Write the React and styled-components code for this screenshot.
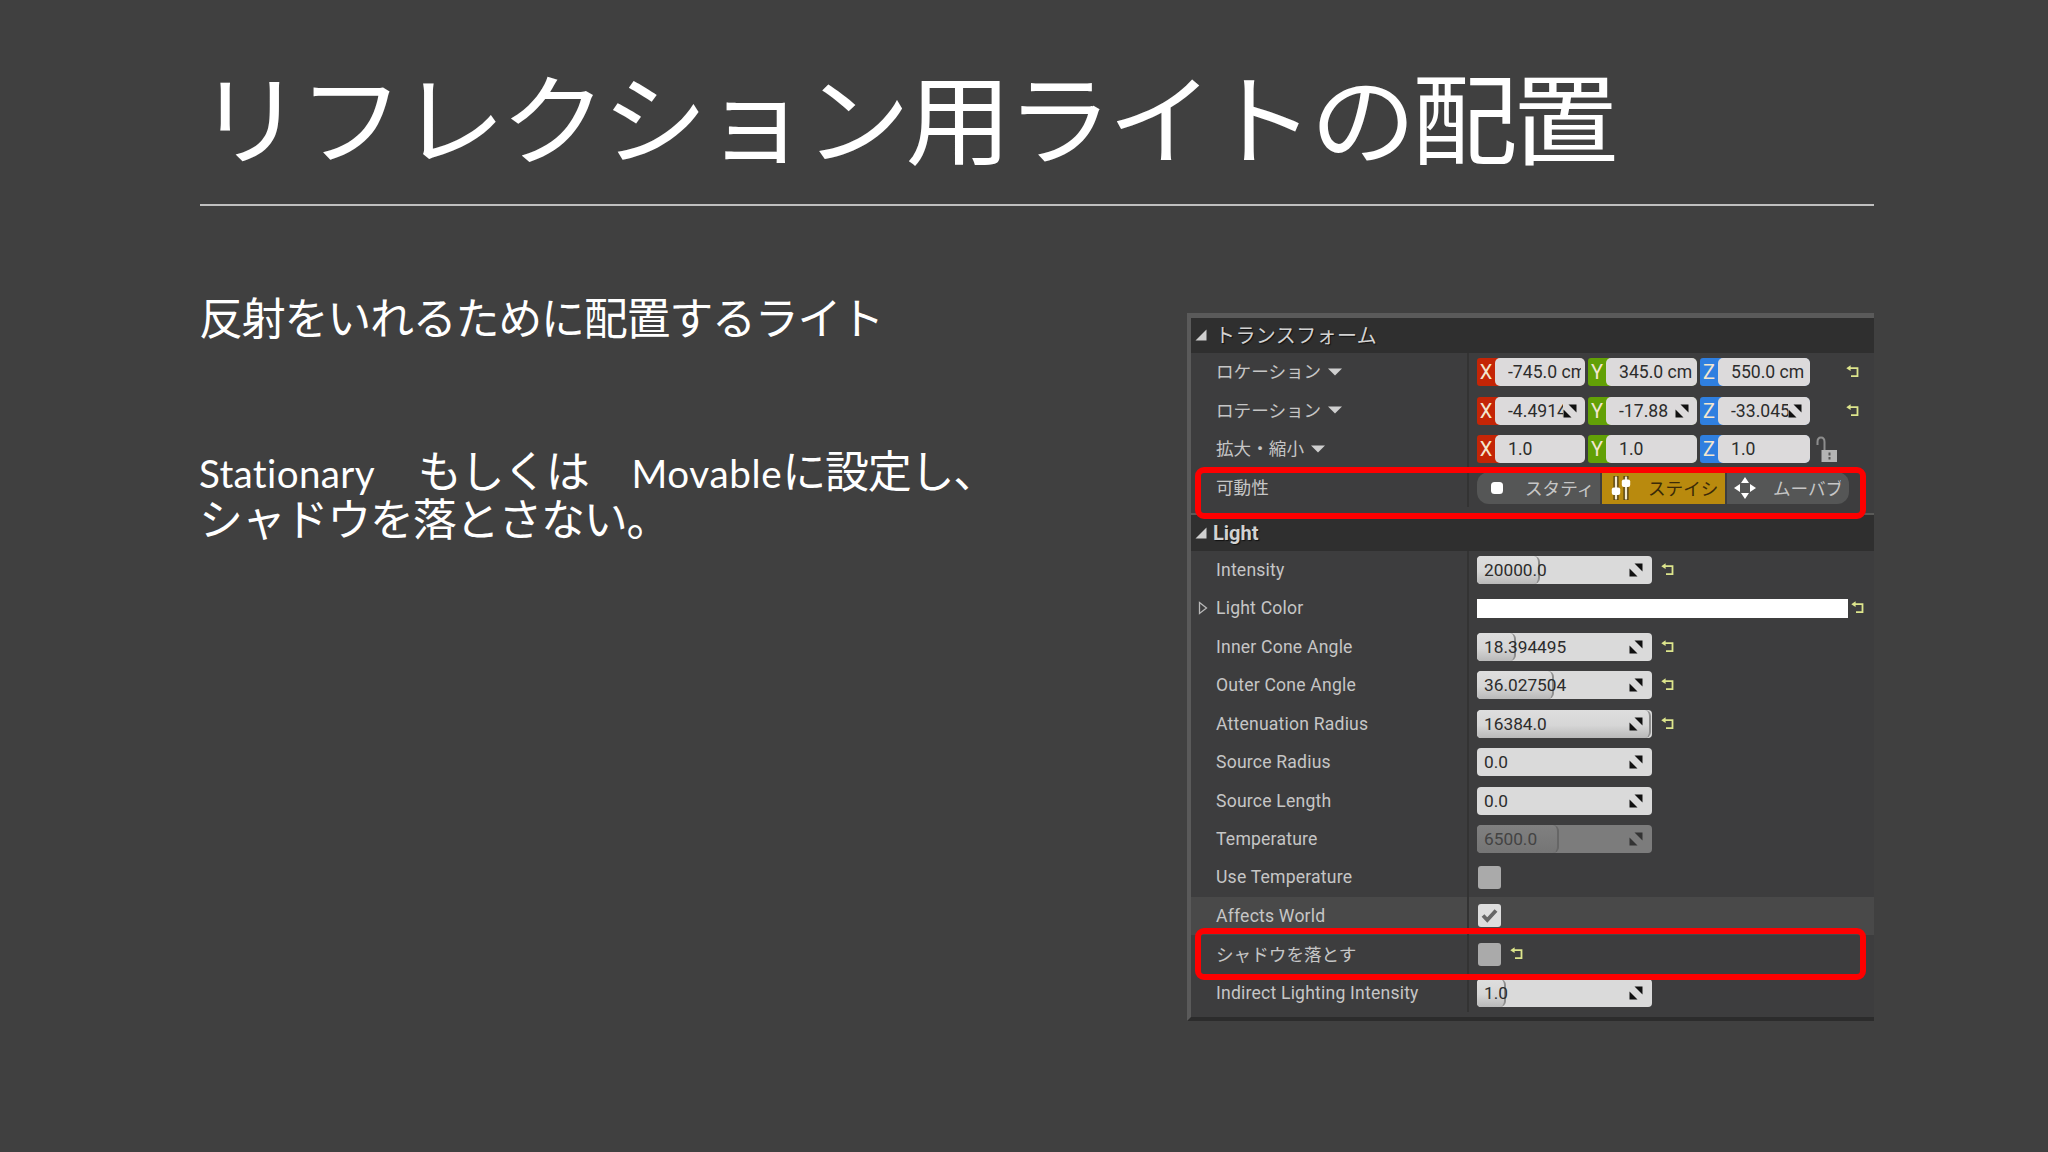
import React from 'react';
import styled, { createGlobalStyle } from 'styled-components';

const GlobalStyle = createGlobalStyle`
  * {
    box-sizing: border-box;
  }

  body {
    margin: 0;
    background: #404040;
  }
`;

const Slide = styled.div`
  width: 2048px;
  height: 1152px;
  padding: 60px 174px 0 200px;
  background: #404040;
  color: #fff;
  font-family: Lato, 'Noto Sans CJK JP', sans-serif;
  overflow: hidden;
`;

const TitleBar = styled.header`
  height: 146px;
  border-bottom: 2px solid #c0c0c0;
`;

const Title = styled.h1`
  margin: 0 0 0 -3px;
  height: 120px;
  line-height: 109px;
  font-family: 'Noto Sans CJK JP', sans-serif;
  font-size: 106px;
  font-weight: 400;
  letter-spacing: -4.8px;
  white-space: nowrap;
  transform: scaleY(0.935);
`;

const Content = styled.main`
  display: flex;
  justify-content: space-between;
`;

const Copy = styled.div`
  padding-top: 89px;
`;

const Paragraph = styled.p`
  margin: 0 0 ${props => props.$gap || 0}px -1px;
  font-size: 44px;
  letter-spacing: -1.25px;
  line-height: 46px;
  white-space: nowrap;
`;

const Latin = styled.span`
  font-size: 38.6px;
  letter-spacing: ${props => props.$spacing}px;
`;

const Panel = styled.section`
  width: 687px;
  height: 708px;
  margin-top: 107px;
  border-top: 5px solid #5a5a5a;
  border-left: 4px solid #5a5a5a;
  border-bottom: 4px solid #2c2c2c;
  background: #3d3d3e;
  color: #c6c6c6;
  font-family: Roboto, 'Noto Sans CJK JP', sans-serif;
  font-size: 17.6px;
`;

const SectionHeader = styled.div`
  display: flex;
  align-items: center;
  height: ${props => (props.$bold ? 36 : 35)}px;
  padding: 0 0 ${props => (props.$bold ? 0 : 2)}px 4px;
  background: #2f2f2f;
  color: #d2d2d2;
  font-size: 20px;
  font-weight: ${props => (props.$bold ? 700 : 400)};
  text-shadow: 1px 1px 1px #111;
`;

const SectionTitle = styled.span`
  margin-left: ${props => props.$indent}px;
  letter-spacing: ${props => props.$spacing}px;
`;

const Rows = styled.div`
  padding-bottom: ${props => props.$end || 0}px;
  border-bottom: ${props => (props.$line ? '2px solid #5a5a58' : 'none')};
`;

const Row = styled.div`
  position: relative;
  display: flex;
  height: 38.45px;
  background: ${props => (props.$hover ? '#494949' : 'transparent')};
`;

const Label = styled.div`
  display: flex;
  align-items: center;
  width: 278px;
  padding: 0 0 ${props => props.$lift || 0}px ${props => (props.$arrow ? 7 : 25)}px;
  border-right: 2px solid #333;
  letter-spacing: ${props => props.$spacing || 0}px;
  white-space: nowrap;

  svg {
    flex: none;
  }
`;

const LabelText = styled.span`
  margin: 0 7px 0 ${props => (props.$arrow ? 8 : 0)}px;
`;

const Field = styled.div`
  display: flex;
  align-items: center;
  padding-left: 8px;
`;

const Axis = styled.div`
  display: flex;
  align-items: center;
  width: ${props => props.$width}px;
  height: 28px;
  margin-right: 3px;
  background: ${props => props.$color};
  border-radius: 3px 6px 6px 3px;
`;

const AxisName = styled.span`
  width: 18px;
  color: #f3e6cf;
  font-size: 20px;
  line-height: 28px;
  text-align: center;
`;

const AxisInput = styled.div`
  display: flex;
  align-items: center;
  flex: 1;
  min-width: 0;
  height: 28px;
  padding: 0 ${props => (props.$spin ? 8 : 4)}px 0 13px;
  border-radius: 5px;
  background: #dcdadb;
  color: #2c2c2c;
  font-size: 17.6px;
`;

const AxisValue = styled.span`
  flex: 1;
  min-width: 0;
  overflow: hidden;
  white-space: nowrap;
`;

const NumberInput = styled.div`
  position: relative;
  display: flex;
  align-items: center;
  justify-content: space-between;
  width: 175px;
  height: 28px;
  padding: 0 9px 0 7px;
  border-radius: 4px;
  overflow: hidden;
  background: ${props => (props.$disabled ? '#7c7c7c' : '#dadada')};
  color: ${props => (props.$disabled ? '#434343' : '#2c2c2c')};
  font-size: 17.3px;
`;

const SliderFill = styled.span`
  position: absolute;
  inset: 0 auto 0 0;
  border-right: 2px solid ${props => (props.$disabled ? '#666' : '#8e8e8e')};
  border-radius: 4px 6px 6px 4px;
  background: ${props =>
    props.$disabled
      ? 'linear-gradient(#808080, #757575)'
      : 'linear-gradient(#dedede, #d6d6d6 55%, #b9b9b9)'};
`;

const NumberText = styled.span`
  position: relative;
`;

const SpinSvg = styled.svg`
  position: relative;
  flex: none;
`;

const ResetSlot = styled.span`
  display: flex;
  margin-left: ${props => props.$left}px;
`;

const ColorBar = styled.div`
  width: 371px;
  height: 19px;
  background: #fff;
`;

const Checkbox = styled.div`
  display: flex;
  align-items: center;
  justify-content: center;
  width: 23px;
  height: 23px;
  margin-left: 1px;
  border-radius: 3px;
  background: ${props => (props.$checked ? '#dedede' : '#aaa')};
`;

const Mobility = styled.div`
  display: flex;
  gap: 2px;
`;

const MobilityButton = styled.div`
  display: flex;
  align-items: center;
  width: ${props => props.$width}px;
  height: 32px;
  padding: 0 ${props => props.$end}px 0 ${props => props.$start}px;
  border-radius: ${props => props.$radius || 0};
  background: ${props => (props.$active ? '#b98a0e' : '#555656')};
  color: ${props => (props.$active ? '#3b2a08' : '#c6c6c6')};

  svg {
    flex: none;
  }
`;

const MobilityName = styled.span`
  flex: 1;
  min-width: 0;
  margin-left: ${props => props.$left}px;
  overflow: hidden;
  white-space: nowrap;
`;

const Highlight = styled.div`
  position: absolute;
  z-index: 1;
  top: ${props => props.$top}px;
  left: 4px;
  width: 671px;
  height: 52px;
  border: 6px solid #fe0000;
  border-radius: 9px;
`;

function OpenArrow() {
  return (
    <svg width="12" height="12" viewBox="0 0 12 12">
      <path d="M11.5 0.5V11.5H0.5Z" fill="#cfcfcf" />
    </svg>
  );
}

function ClosedArrow() {
  return (
    <svg width="10" height="14" viewBox="0 0 10 14">
      <path d="M1.5 1.5L8.5 7L1.5 12.5Z" fill="none" stroke="#b8b8b8" strokeWidth="1.3" />
    </svg>
  );
}

function DropArrow() {
  return (
    <svg width="14" height="10" viewBox="0 0 14 10">
      <path d="M0 2.5H14L7 9.5Z" fill="#cfcfcf" />
    </svg>
  );
}

function SpinIcon({ color = '#111' }) {
  return (
    <SpinSvg width="14" height="14" viewBox="0 0 14 14">
      <path d="M5.5 0.5H13.5V8.5Z M0.5 5.5V13.5H8.5Z" fill={color} />
    </SpinSvg>
  );
}

function ResetIcon() {
  return (
    <svg width="14" height="14" viewBox="0 0 14 14">
      <path d="M3.5 3.2H11.5V11.2H5" fill="none" stroke="#dde58c" strokeWidth="1.8" />
      <path d="M0.3 3.2L4.6 0.3V6.1Z" fill="#dde58c" />
    </svg>
  );
}

function LockIcon() {
  return (
    <svg width="22" height="27" viewBox="0 0 22 27">
      <path d="M1.5 9V6Q1.5 1.5 5 1.5Q8.5 1.5 8.5 6V14" fill="none" stroke="#8d8d8d" strokeWidth="2" />
      <rect x="5.5" y="14" width="15.5" height="12" fill="#b4b4b4" />
      <path d="M13.5 16.5V19.5M13.5 21V23.5" stroke="#555" strokeWidth="2" />
    </svg>
  );
}

function StaticIcon() {
  return (
    <svg width="14" height="14" viewBox="0 0 14 14">
      <rect x="1" y="1" width="12" height="12" rx="3.5" fill="#fff" />
    </svg>
  );
}

function StationaryIcon() {
  return (
    <svg width="20" height="26" viewBox="0 0 20 26">
      <path d="M5 1V25M15 1V25" stroke="#4a3606" strokeWidth="5" />
      <path d="M5 1.5V24.5M15 1.5V24.5" stroke="#f4ead0" strokeWidth="2.4" />
      <rect x="0.8" y="12.5" width="8.4" height="7.5" rx="2" fill="#fff" />
      <rect x="10.8" y="4.5" width="8.4" height="7.5" rx="2" fill="#fff" />
    </svg>
  );
}

function MovableIcon() {
  return (
    <svg width="22" height="22" viewBox="0 0 22 22">
      <path d="M11 0L15 6H7Z M11 22L15 16H7Z M0 11L6 7V15Z M22 11L16 7V15Z" fill="#fff" />
    </svg>
  );
}

function CheckIcon() {
  return (
    <svg width="17" height="15" viewBox="0 0 17 15">
      <path d="M2 7.5L6.3 12L15 2.5" fill="none" stroke="#666" strokeWidth="3.8" />
    </svg>
  );
}

const axes = [
  { name: 'X', color: '#c42506', width: 108 },
  { name: 'Y', color: '#62a006', width: 109 },
  { name: 'Z', color: '#2f7fe0', width: 110 },
];

const vectors = [
  { label: 'ロケーション', values: ['-745.0 cm', '345.0 cm', '550.0 cm'] },
  { label: 'ロテーション', values: ['-4.4914', '-17.88', '-33.045'], spin: true },
  { label: '拡大・縮小', values: ['1.0', '1.0', '1.0'], locked: true },
];

const lightRows = [
  { label: 'Intensity', value: '20000.0', fill: 63, reset: true },
  { label: 'Light Color', color: true },
  { label: 'Inner Cone Angle', value: '18.394495', fill: 39, reset: true },
  { label: 'Outer Cone Angle', value: '36.027504', fill: 77, reset: true },
  { label: 'Attenuation Radius', value: '16384.0', fill: 174, reset: true },
  { label: 'Source Radius', value: '0.0' },
  { label: 'Source Length', value: '0.0' },
  { label: 'Temperature', value: '6500.0', fill: 82, disabled: true },
  { label: 'Use Temperature', check: true },
  { label: 'Affects World', check: true, checked: true, hover: true },
  { label: 'シャドウを落とす', check: true, reset: true, highlight: true },
  { label: 'Indirect Lighting Intensity', value: '1.0', fill: 29 },
];

function VectorRow({ label, values, spin, locked }) {
  return (
    <Row>
      <Label $lift={3}>
        <LabelText>{label}</LabelText>
        <DropArrow />
      </Label>
      <Field>
        {axes.map((axis, i) => (
          <Axis key={axis.name} $color={axis.color} $width={axis.width}>
            <AxisName>{axis.name}</AxisName>
            <AxisInput $spin={spin}>
              <AxisValue>{values[i]}</AxisValue>
              {spin && <SpinIcon />}
            </AxisInput>
          </Axis>
        ))}
        <ResetSlot $left={locked ? 3 : 33}>
          {locked ? <LockIcon /> : <ResetIcon />}
        </ResetSlot>
      </Field>
    </Row>
  );
}

function LightRow({ row }) {
  return (
    <Row $hover={row.hover}>
      <Label $arrow={row.color} $lift={row.highlight ? 2 : 0} $spacing={row.highlight ? 0 : 0.2}>
        {row.color && <ClosedArrow />}
        <LabelText $arrow={row.color}>{row.label}</LabelText>
      </Label>
      <Field>
        {row.color && <ColorBar />}
        {row.check && (
          <Checkbox $checked={row.checked}>{row.checked && <CheckIcon />}</Checkbox>
        )}
        {row.value && (
          <NumberInput $disabled={row.disabled}>
            {row.fill && <SliderFill $disabled={row.disabled} style={{ width: row.fill }} />}
            <NumberText>{row.value}</NumberText>
            <SpinIcon color={row.disabled ? '#333' : '#111'} />
          </NumberInput>
        )}
        {(row.reset || row.color) && (
          <ResetSlot $left={row.color ? 3 : 9}>
            <ResetIcon />
          </ResetSlot>
        )}
      </Field>
      {row.highlight && <Highlight $top={-7} />}
    </Row>
  );
}

function DetailsPanel() {
  return (
    <Panel>
      <SectionHeader>
        <OpenArrow />
        <SectionTitle $indent={8} $spacing={0.4}>トランスフォーム</SectionTitle>
      </SectionHeader>
      <Rows $line $end={6}>
        {vectors.map(vector => (
          <VectorRow key={vector.label} {...vector} />
        ))}
        <Row>
          <Label $lift={2}>
            <LabelText>可動性</LabelText>
          </Label>
          <Field>
            <Mobility>
              <MobilityButton $width={123} $start={13} $end={2} $radius="12px 0 0 12px">
                <StaticIcon />
                <MobilityName $left={21}>スタティ</MobilityName>
              </MobilityButton>
              <MobilityButton $width={123} $start={9} $end={4} $active>
                <StationaryIcon />
                <MobilityName $left={17}>ステイシ</MobilityName>
              </MobilityButton>
              <MobilityButton $width={122} $start={7} $end={8} $radius="0 12px 12px 0">
                <MovableIcon />
                <MobilityName $left={17}>ムーバブ</MobilityName>
              </MobilityButton>
            </Mobility>
          </Field>
          <Highlight $top={-1} />
        </Row>
      </Rows>
      <SectionHeader $bold>
        <OpenArrow />
        <SectionTitle $indent={6} $spacing={0}>Light</SectionTitle>
      </SectionHeader>
      <Rows>
        {lightRows.map(row => (
          <LightRow key={row.label} row={row} />
        ))}
      </Rows>
    </Panel>
  );
}

function App() {
  return (
    <>
      <GlobalStyle />
      <Slide>
        <TitleBar>
          <Title>リフレクション用ライトの配置</Title>
        </TitleBar>
        <Content>
          <Copy>
            <Paragraph $gap={107}>反射をいれるために配置するライト</Paragraph>
            <Paragraph>
              <Latin $spacing={0.35}>Stationary</Latin>　もしくは　<Latin $spacing={0.65}>Movable</Latin>に設定し、
            </Paragraph>
            <Paragraph>シャドウを落とさない。</Paragraph>
          </Copy>
          <DetailsPanel />
        </Content>
      </Slide>
    </>
  );
}

export default App;
